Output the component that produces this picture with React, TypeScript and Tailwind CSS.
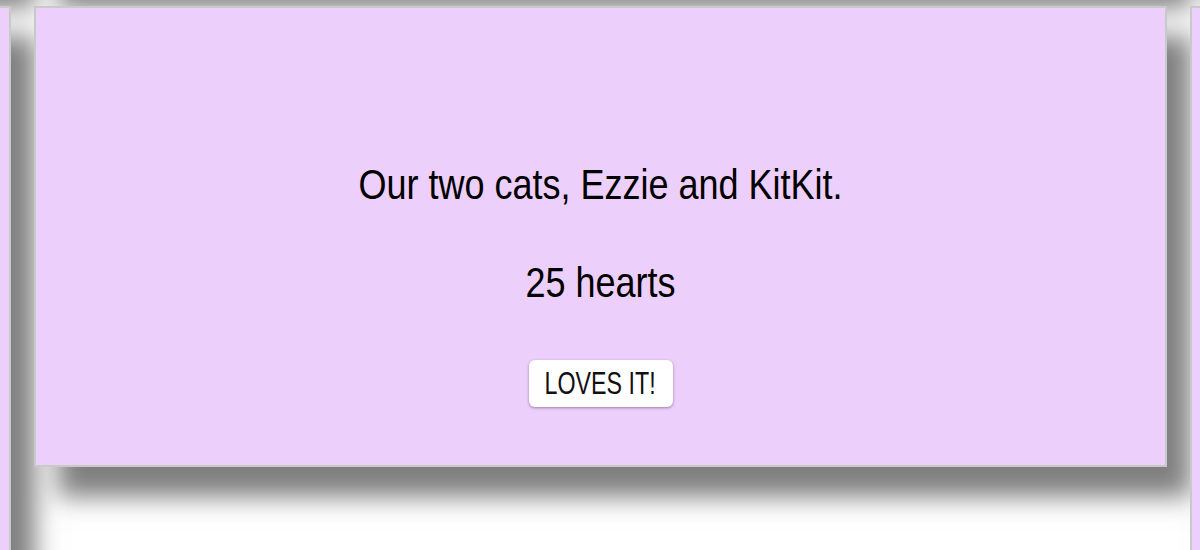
import React from 'react';

const cardClass =
    "shrink-0 w-[1133px] border-2 border-[#c9c9c9] bg-[#edcffb] shadow-[24px_30px_24px_rgba(0,0,0,0.5)]";

function PostCard({caption, hearts}: {caption: string; hearts: number}) {
    return (
        <div className={cardClass + " h-[461px] flex flex-col items-center pt-[156px]"}>
            <p className="text-[42px] leading-none text-black scale-x-[0.857] whitespace-nowrap">{caption}</p>
            <p className="mt-[56px] text-[42px] leading-none text-black scale-x-[0.857] whitespace-nowrap">{hearts} hearts</p>
            <button
                className="mt-[56px] w-[144px] h-[47px] rounded-[6px] bg-white shadow-[0_1px_3px_rgba(60,20,80,0.45)] flex items-center justify-center">
                <span className="text-[31px] leading-none text-[#111] scale-x-[0.75] whitespace-nowrap">LOVES IT!</span>
            </button>
        </div>
    );
}

export default function App() {
    return (
        <div className="relative h-[550px] w-full overflow-hidden bg-white font-['Liberation_Sans',Arial,sans-serif]">
            <div className="flex flex-col gap-[28px] -mt-[422px] -ml-[1122px]">
                <div className="flex items-start gap-[23px]">
                    <div className={cardClass + " h-[400px]"}/>
                    <div className={cardClass + " h-[400px]"}/>
                    <div className={cardClass + " h-[400px]"}/>
                </div>
                <div className="flex items-start gap-[23px]">
                    <div className={cardClass + " h-[640px]"}/>
                    <PostCard caption="Our two cats, Ezzie and KitKit." hearts={25}/>
                    <div className={cardClass + " h-[640px]"}/>
                </div>
            </div>
        </div>
    );
}
